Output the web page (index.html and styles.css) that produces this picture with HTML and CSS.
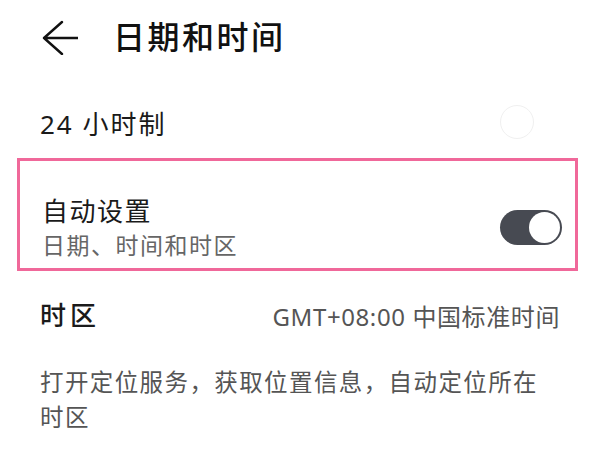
FILE: index.html
```html
<!DOCTYPE html>
<html lang="zh-CN">
<head>
    <meta charset="UTF-8">
    <meta name="viewport" content="width=device-width, initial-scale=1.0">
    <title>日期和时间</title>
    <link rel="stylesheet" href="styles.css">
</head>
<body>

    <div class="header">
        <svg class="back" width="36" height="36" viewBox="0 0 36 36">
            <path d="M20 3 L2 19 L20 35 M2 19 L36 19" fill="none" stroke="#111" stroke-width="2.4" stroke-linecap="round" stroke-linejoin="round"/>
        </svg>
        <h1>日期和时间</h1>
    </div>

    <div class="row row-24">
        <span class="label">24 小时制</span>
        <span class="ghost-knob"></span>
    </div>

    <div class="row auto-box">
        <div class="texts">
            <div class="label">自动设置</div>
            <div class="sub">日期、时间和时区</div>
        </div>
        <span class="switch on"><span class="knob"></span></span>
    </div>

    <div class="row row-zone">
        <span class="label">时区</span>
        <span class="value">GMT+08:00 中国标准时间</span>
    </div>

    <p class="note">打开定位服务，获取位置信息，自动定位所在时区</p>

</body>
</html>
```

FILE: styles.css
```css
body {
    margin: 0;
    font-family: "Noto Sans", "Noto Sans CJK SC", sans-serif;
    background: #fff;
    color: #111;
}
.header {
    display: flex;
    align-items: center;
    height: 74px;
    padding-left: 42px;
}
.back {
    display: block;
}
.header h1 {
    margin: 0 0 0 35px;
    font-size: 32px;
    font-weight: 500;
    letter-spacing: 2.5px;
    line-height: 40px;
}
.row {
    display: flex;
    align-items: center;
    justify-content: space-between;
    padding: 0 40px;
}
.label {
    font-size: 26px;
    color: #1a1a1a;
    line-height: 30px;
}
.row-24 {
    height: 68px;
    padding-top: 16px;
    padding-right: 66px;
}
.row-24 .label {
    letter-spacing: 2px;
}
.ghost-knob {
    width: 32px;
    height: 32px;
    border: 1px solid #f0f0f0;
    border-radius: 50%;
    margin-top: -4px;
}
.auto-box {
    margin: 0 22px 0 17px;
    border: 3px solid #f0689a;
    padding: 35px 13px 6px 22px;
}
.auto-box .label {
    letter-spacing: 1.5px;
}
.sub {
    font-size: 23px;
    color: #666;
    line-height: 34px;
    letter-spacing: 1.5px;
    margin-top: 2px;
}
.switch {
    display: flex;
    justify-content: flex-end;
    box-sizing: border-box;
    width: 62px;
    height: 35px;
    padding: 2px;
    border-radius: 18px;
    background: #474a52;
    margin-bottom: 3px;
}
.knob {
    width: 31px;
    height: 31px;
    border-radius: 50%;
    background: #fff;
}
.row-zone {
    height: 88px;
}
.row-zone .label {
    font-weight: 500;
    letter-spacing: 4px;
}
.value {
    font-size: 24px;
    color: #555;
    letter-spacing: 0.6px;
}
.note {
    max-width: 510px;
    margin: 6px 40px 0;
    font-size: 23.5px;
    line-height: 35px;
    color: #555;
    letter-spacing: 1.4px;
}
```
